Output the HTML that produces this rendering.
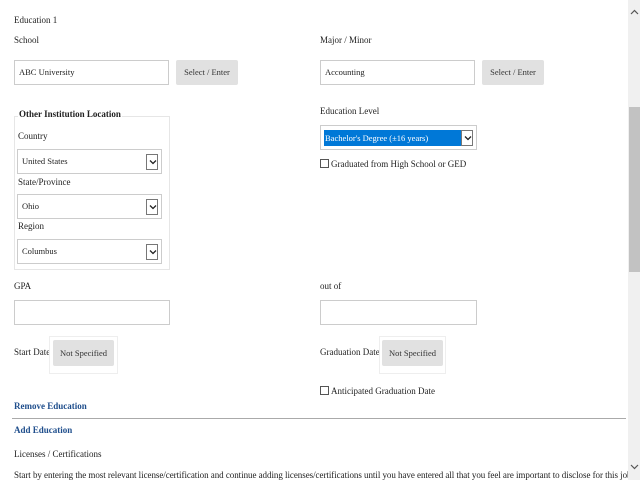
<!DOCTYPE html>
<html><head><style>
*{margin:0;padding:0;box-sizing:border-box}
body{width:640px;height:480px;overflow:hidden;background:#fff;font-family:"Liberation Serif",serif;font-size:9px;color:#222;position:relative}
.a{position:absolute;white-space:nowrap;line-height:10px}
.in{position:absolute;border:1px solid #ccc;background:#fff;height:25px;padding-left:4px;line-height:23px;font-size:8.5px}
.btn{position:absolute;background:#e1e1e1;border-radius:2px;height:25px;line-height:25px;text-align:center;font-size:8.5px;color:#333}
.sel{position:absolute;border:1px solid #ccc;height:25px;background:#fff;font-size:8.5px;line-height:23px;padding-left:4px}
.arr{position:absolute;right:3px;top:4px;width:12px;height:16px;border:1px solid #777;background:#fff}
.arr svg{position:absolute;left:2px;top:4px}
.b{font-weight:bold;color:#1f4e8c}
.cb{position:absolute;width:9px;height:9px;border:1px solid #555;background:#fff}
</style></head><body>
<div class="a" style="left:14px;top:15px">Education 1</div>
<div class="a" style="left:14px;top:35px">School</div>
<div class="a" style="left:320px;top:35px">Major / Minor</div>
<div class="in" style="left:14px;top:60px;width:155px">ABC University</div>
<div class="btn" style="left:176px;top:60px;width:62px">Select / Enter</div>
<div class="in" style="left:320px;top:60px;width:155px">Accounting</div>
<div class="btn" style="left:482px;top:60px;width:62px">Select / Enter</div>

<div style="position:absolute;left:14px;top:116px;width:156px;height:154px;border:1px solid #e6e6e6"></div>
<div class="a" style="left:18px;top:109px;background:#fff;padding:0 1px;font-weight:bold">Other Institution Location</div>
<div class="a" style="left:18px;top:131px">Country</div>
<div class="sel" style="left:17px;top:149px;width:145px">United States<div class="arr"><svg width="8" height="6"><path d="M1 1.5L4 4.5L7 1.5" stroke="#222" stroke-width="1.3" fill="none"/></svg></div></div>
<div class="a" style="left:18px;top:177px">State/Province</div>
<div class="sel" style="left:17px;top:194px;width:145px">Ohio<div class="arr"><svg width="8" height="6"><path d="M1 1.5L4 4.5L7 1.5" stroke="#222" stroke-width="1.3" fill="none"/></svg></div></div>
<div class="a" style="left:18px;top:221px">Region</div>
<div class="sel" style="left:17px;top:239px;width:145px">Columbus<div class="arr"><svg width="8" height="6"><path d="M1 1.5L4 4.5L7 1.5" stroke="#222" stroke-width="1.3" fill="none"/></svg></div></div>

<div class="a" style="left:320px;top:106px">Education Level</div>
<div class="sel" style="left:320px;top:125px;width:157px;padding-left:0">
<div style="position:absolute;left:3px;top:4px;width:137px;height:16px;background:#0078d7;color:#fff;line-height:16px;padding-left:1px">Bachelor's Degree (±16 years)</div>
<div class="arr" style="right:3px"><svg width="8" height="6"><path d="M1 1.5L4 4.5L7 1.5" stroke="#222" stroke-width="1.3" fill="none"/></svg></div></div>
<div class="cb" style="left:320px;top:159px"></div>
<div class="a" style="left:331px;top:159px">Graduated from High School or GED</div>

<div class="a" style="left:14px;top:281px">GPA</div>
<div class="a" style="left:320px;top:281px">out of</div>
<div class="in" style="left:14px;top:300px;width:156px"></div>
<div class="in" style="left:320px;top:300px;width:157px"></div>

<div class="a" style="left:14px;top:347px">Start Date</div>
<div style="position:absolute;left:49px;top:336px;width:69px;height:38px;border:1px solid #eee"></div>
<div class="btn" style="left:53px;top:340px;width:61px;height:26px;line-height:26px">Not Specified</div>
<div class="a" style="left:320px;top:347px">Graduation Date</div>
<div style="position:absolute;left:379px;top:336px;width:67px;height:38px;border:1px solid #eee"></div>
<div class="btn" style="left:382px;top:340px;width:61px;height:26px;line-height:26px">Not Specified</div>
<div class="cb" style="left:320px;top:386px"></div>
<div class="a" style="left:331px;top:386px">Anticipated Graduation Date</div>

<div class="a b" style="left:14px;top:401px">Remove Education</div>
<div style="position:absolute;left:12px;top:418px;width:614px;height:1px;background:#aaa"></div>
<div class="a b" style="left:14px;top:425px">Add Education</div>
<div class="a" style="left:14px;top:449px">Licenses / Certifications</div>
<div class="a" style="left:14px;top:470px;letter-spacing:-0.05px">Start by entering the most relevant license/certification and continue adding licenses/certifications until you have entered all that you feel are important to disclose for this job.</div>

<div style="position:absolute;left:628px;top:0;width:12px;height:480px;background:#f0f0f0"></div>
<div style="position:absolute;left:629px;top:107px;width:11px;height:165px;background:#c2c2c2"></div>
<svg style="position:absolute;left:630px;top:9px" width="9" height="6"><path d="M1 5L4.5 1.5L8 5" stroke="#555" stroke-width="1.2" fill="none"/></svg>
<svg style="position:absolute;left:630px;top:464px" width="9" height="6"><path d="M1 1L4.5 4.5L8 1" stroke="#555" stroke-width="1.2" fill="none"/></svg>
</body></html>
